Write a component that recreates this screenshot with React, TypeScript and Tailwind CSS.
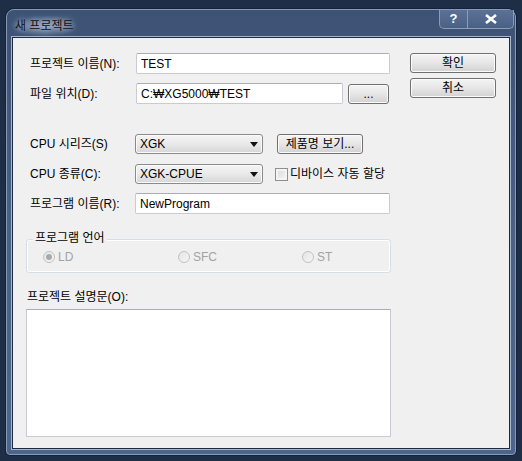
import React from "react";

const FONT = { fontFamily: '"Liberation Sans", "Noto Sans CJK KR", sans-serif' };

function TextBox({ value, className }: { value?: string; className: string }) {
  return (
    <div
      className={`flex items-center rounded-[2px] border border-[#c9cbd0] border-t-[#abadb3] bg-white pl-[4px] text-[12px] text-black ${className}`}
    >
      {value}
    </div>
  );
}

function Button({ label, className }: { label: string; className: string }) {
  return (
    <div
      className={`flex items-center justify-center rounded-[3px] border border-[#707070] bg-gradient-to-b from-[#f4f4f4] via-[#e6e6e6] to-[#d2d2d2] text-[12px] text-black shadow-[inset_0_0_0_1px_#fbfbfb] ${className}`}
    >
      {label}
    </div>
  );
}

function Combo({ value }: { value: string }) {
  return (
    <div className="flex h-[20px] w-[128px] items-center justify-between rounded-[3px] border border-[#8a8a8a] bg-gradient-to-b from-[#f4f4f4] via-[#e9e9e9] to-[#d6d6d6] pl-[4px] pr-[4px] text-[12px] text-black shadow-[inset_0_0_0_1px_#fbfbfb]">
      <span>{value}</span>
      <svg width="8" height="5" viewBox="0 0 8 5">
        <path d="M0 0 H8 L4 5 Z" fill="#111" />
      </svg>
    </div>
  );
}

function Radio({ label, checked }: { label: string; checked?: boolean }) {
  return (
    <div className="flex items-center gap-[3px] text-[12px] text-[#a3a3a3]">
      <div className="flex h-[12px] w-[12px] items-center justify-center rounded-full border border-[#c2c2c2] bg-gradient-to-br from-[#e4e4e4] to-[#f6f6f6]">
        {checked && <div className="h-[6px] w-[6px] rounded-full bg-[#a9a9a9]" />}
      </div>
      <span>{label}</span>
    </div>
  );
}

export default function App() {
  return (
    <div
      className="h-[461px] w-[522px] overflow-hidden bg-[#1f2e47] pl-[6px] pt-[9px]"
      style={FONT}
    >
      <div className="flex h-[446px] w-[510px] flex-col rounded-t-[8px] rounded-b-[4px] border border-[#8a9bb5] bg-gradient-to-b from-[#3d5274] via-[#4a6288] to-[#4c658c] shadow-[0_0_0_1px_#14213a]">
        {/* title bar */}
        <div className="flex h-[27px] items-start justify-between">
          <div className="ml-[4px] mt-[5px] rounded-full bg-[radial-gradient(ellipse_at_center,rgba(200,215,235,0.55),rgba(200,215,235,0)_70%)] px-[4px] py-[2px] text-[12px] text-[#111] [text-shadow:0_0_6px_#dfe8f4]">
            새 프로젝트
          </div>
          <div className="mr-[1px] flex h-[19px] overflow-hidden rounded-b-[5px] border border-t-0 border-[#8c9cb4] bg-gradient-to-b from-[#5b7195] to-[#4a6186]">
            <div className="flex w-[28px] items-center justify-center border-r border-[#8c9cb4] text-[13px] font-bold text-white">
              ?
            </div>
            <div className="flex w-[45px] items-center justify-center">
              <svg width="12" height="10" viewBox="0 0 12 10">
                <path d="M1 1 L11 9 M11 1 L1 9" stroke="#fff" strokeWidth="2.6" />
              </svg>
            </div>
          </div>
        </div>

        {/* client area */}
        <div className="mx-[5px] mb-[5px] flex flex-1 border border-[#1d2a40] bg-[#f0f0f0] shadow-[0_0_0_1px_#a8b6cc]">
          <div className="flex w-[378px] flex-col pl-[13px] pt-[15px]">
            <div className="flex h-[21px] items-center">
              <span className="w-[110px] pl-[4px] text-[12px] text-black">프로젝트 이름(N):</span>
              <TextBox value="TEST" className="h-[21px] w-[254px]" />
            </div>
            <div className="mt-[9px] flex h-[21px] items-center">
              <span className="w-[110px] pl-[4px] text-[12px] text-black">파일 위치(D):</span>
              <TextBox value="C:₩XG5000₩TEST" className="h-[21px] w-[207px]" />
              <Button label="..." className="ml-[5px] h-[20px] w-[41px]" />
            </div>

            <div className="mt-[30px] flex h-[20px] items-center">
              <span className="w-[109px] pl-[4px] text-[12px] text-black">CPU 시리즈(S)</span>
              <Combo value="XGK" />
              <Button label="제품명 보기..." className="ml-[14px] h-[20px] w-[86px]" />
            </div>
            <div className="mt-[10px] flex h-[20px] items-center">
              <span className="w-[109px] pl-[4px] text-[12px] text-black">CPU 종류(C):</span>
              <Combo value="XGK-CPUE" />
              <div className="ml-[12px] h-[13px] w-[13px] border border-[#8e8f8f] bg-gradient-to-br from-[#d9d9d9] to-[#f7f7f7] shadow-[inset_0_0_0_2px_#f4f4f4]" />
              <span className="ml-[2px] whitespace-nowrap text-[12px] text-black">디바이스 자동 할당</span>
            </div>
            <div className="mt-[9px] flex h-[21px] items-center">
              <span className="w-[109px] pl-[4px] text-[12px] text-black">프로그램 이름(R):</span>
              <TextBox value="NewProgram" className="h-[21px] w-[255px]" />
            </div>

            {/* group box */}
            <div className="relative mt-[25px] h-[34px] w-[365px] rounded-[3px] border border-[#d5dfe5] shadow-[inset_0_0_0_1px_#ffffff]">
              <span className="absolute left-[6px] top-[-9px] bg-[#f0f0f0] px-[2px] text-[12px] leading-[14px] text-black">
                프로그램 언어
              </span>
              <div className="flex pl-[16px] pt-[8px]">
                <div className="w-[135px]">
                  <Radio label="LD" checked />
                </div>
                <div className="w-[124px]">
                  <Radio label="SFC" />
                </div>
                <Radio label="ST" />
              </div>
            </div>

            <span className="mt-[17px] pl-[1px] text-[12px] leading-[14px] text-black">프로젝트 설명문(O):</span>
            <div className="mt-[5px] h-[128px] w-[365px] border border-[#c9cbd0] border-t-[#abadb3] bg-white" />
          </div>

          <div className="flex flex-col pl-[19px] pt-[15px]">
            <Button label="확인" className="h-[20px] w-[86px]" />
            <Button label="취소" className="mt-[5px] h-[20px] w-[86px]" />
          </div>
        </div>
      </div>
    </div>
  );
}
